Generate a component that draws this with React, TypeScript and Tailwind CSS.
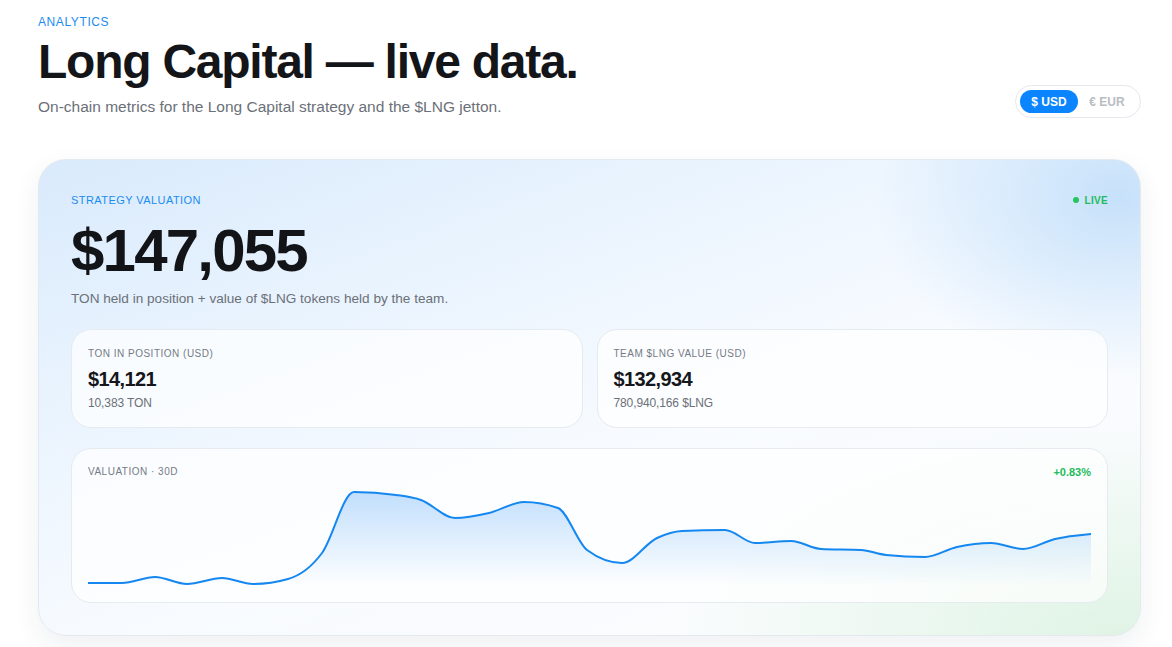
// valuation sparkline, sampled from the last 30 days (local svg coords)
const points: [number, number][] = [
  [0, 97], [34, 97], [67, 91], [99, 98], [134, 92], [165, 98], [200, 93],
  [234, 67], [266, 6], [308, 9], [333, 14], [367, 32], [401, 27], [436, 16],
  [470, 22], [499, 64], [534, 77], [569, 52], [594, 45], [637, 44], [667, 57],
  [703, 55], [733, 63], [773, 64], [798, 69], [837, 71], [869, 61], [903, 57],
  [935, 63], [967, 53], [1003, 48],
];

function monotonePath(p: [number, number][]) {
  const n = p.length;
  const h: number[] = [];
  const s: number[] = [];
  for (let i = 0; i < n - 1; i++) {
    h[i] = p[i + 1][0] - p[i][0];
    s[i] = (p[i + 1][1] - p[i][1]) / h[i];
  }
  const t: number[] = new Array(n).fill(0);
  for (let i = 1; i < n - 1; i++) {
    if (s[i - 1] * s[i] <= 0) {
      t[i] = 0;
    } else {
      const pp = (s[i - 1] * h[i] + s[i] * h[i - 1]) / (h[i - 1] + h[i]);
      t[i] =
        (Math.sign(s[i - 1]) + Math.sign(s[i])) *
        Math.min(Math.abs(s[i - 1]), Math.abs(s[i]), 0.5 * Math.abs(pp));
    }
  }
  t[0] = (3 * s[0] - t[1]) / 2;
  t[n - 1] = (3 * s[n - 2] - t[n - 2]) / 2;
  let d = `M${p[0][0]},${p[0][1]}`;
  for (let i = 0; i < n - 1; i++) {
    const [x0, y0] = p[i];
    const [x1, y1] = p[i + 1];
    const dx = h[i] / 3;
    d += ` C${x0 + dx},${y0 + dx * t[i]} ${x1 - dx},${y1 - dx * t[i + 1]} ${x1},${y1}`;
  }
  return d;
}

const linePath = monotonePath(points);
const areaPath = `${linePath} L1003,100 L0,100 Z`;

interface StatProps {
  label: string;
  value: string;
  sub: string;
}

const Stat = ({ label, value, sub }: StatProps) => {
  return (
    <div className="flex flex-col rounded-[20px] border border-[#e6ebf0] bg-white/70 px-4 pt-[17px] pb-4">
      <div className="text-[10px] leading-[14px] tracking-[0.05em] text-[#757b84]">
        {label}
      </div>
      <div className="mt-1 text-[20px] leading-[28px] font-bold tracking-[-0.03em] text-[#15171b]">
        {value}
      </div>
      <div className="mt-0.5 text-[12px] leading-4 tracking-[-0.01em] text-[#6b7078]">
        {sub}
      </div>
    </div>
  );
};

const Chart = () => {
  return (
    <svg
      viewBox="0 0 1003 100"
      preserveAspectRatio="none"
      className="block h-[100px] w-full"
    >
      <defs>
        <linearGradient id="fill" x1="0" y1="0" x2="0" y2="1">
          <stop offset="0%" stopColor="#2b8ff5" stopOpacity="0.28" />
          <stop offset="100%" stopColor="#2b8ff5" stopOpacity="0" />
        </linearGradient>
      </defs>
      <path d={areaPath} fill="url(#fill)" />
      <path
        d={linePath}
        fill="none"
        stroke="#1487f0"
        strokeWidth="2"
        strokeLinejoin="round"
        strokeLinecap="round"
      />
    </svg>
  );
};

export default function App() {
  return (
    <div className="min-h-screen bg-white pl-[38px] pt-[14px] pb-4 font-['Liberation_Sans',Arial,sans-serif]">
      <div className="w-[1103px]">
        <header className="flex items-end justify-between">
          <div className="flex flex-col">
            <div className="text-[12px] leading-4 tracking-[0.05em] text-[#1a8cf0]">
              ANALYTICS
            </div>
            <h1 className="mt-2 text-[48px] leading-none font-bold tracking-[-0.026em] text-[#141519]">
              Long Capital — live data.
            </h1>
            <p className="mt-[10px] text-[15.5px] leading-[22px] text-[#6b7078]">
              On-chain metrics for the Long Capital strategy and the $LNG jetton.
            </p>
          </div>
          <div className="flex rounded-full border border-[#e5e8ec] bg-white p-1">
            <button className="h-[23px] w-[58px] rounded-full bg-[#0a84ff] text-[12px] font-bold text-white">
              $ USD
            </button>
            <button className="h-[23px] w-[58px] rounded-full text-[12px] font-bold text-[#b8bcc3]">
              € EUR
            </button>
          </div>
        </header>

        <section className="mt-[41px] rounded-[28px] border border-[#e4e9ee] bg-[radial-gradient(ellipse_22%_38%_at_98%_8%,rgba(196,224,250,0.95),transparent),radial-gradient(ellipse_40%_45%_at_98%_100%,rgba(222,243,228,0.95),transparent),linear-gradient(160deg,#d9eafc_0%,#eaf4fe_30%,#f8fbff_58%,#fbfdfc_100%)] p-8 shadow-[0_10px_28px_rgba(20,40,70,0.07)]">
          <div className="flex items-center justify-between">
            <div className="text-[11px] leading-4 tracking-[0.04em] text-[#1a8cf0]">
              STRATEGY VALUATION
            </div>
            <div className="flex items-center gap-[6px] text-[10px] font-bold tracking-[0.03em] text-[#22bb5b]">
              <span className="h-[6px] w-[6px] rounded-full bg-[#22c55e]" />
              LIVE
            </div>
          </div>
          <div className="mt-[13px] text-[60px] leading-none font-bold tracking-[-0.03em] text-[#131418]">
            $147,055
          </div>
          <p className="mt-2 text-[13.6px] leading-5 text-[#6b7078]">
            TON held in position + value of $LNG tokens held by the team.
          </p>

          <div className="mt-5 grid grid-cols-2 gap-[14px]">
            <Stat label="TON IN POSITION (USD)" value="$14,121" sub="10,383 TON" />
            <Stat
              label="TEAM $LNG VALUE (USD)"
              value="$132,934"
              sub="780,940,166 $LNG"
            />
          </div>

          <div className="mt-5 rounded-[20px] border border-[#e6ebf0] bg-white/70 px-4 pt-4 pb-4">
            <div className="flex items-center justify-between">
              <div className="text-[10px] leading-[14px] tracking-[0.05em] text-[#757b84]">
                VALUATION · 30D
              </div>
              <div className="text-[11px] leading-[14px] font-bold text-[#22bb5b]">
                +0.83%
              </div>
            </div>
            <div className="mt-[7px]">
              <Chart />
            </div>
          </div>
        </section>
      </div>
    </div>
  );
}
